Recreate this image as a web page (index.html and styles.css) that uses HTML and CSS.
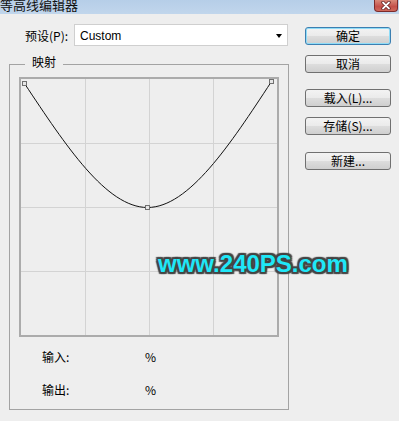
FILE: index.html
```html
<!DOCTYPE html>
<html>
<head>
<meta charset="utf-8">
<link rel="stylesheet" href="styles.css">
</head>
<body>
<div class="titlebar">
  <span class="title">等高线编辑器</span>
  <span class="close"><svg width="12" height="9" viewBox="0 0 12 9"><path d="M3 1.5L9 7.5M9 1.5L3 7.5" stroke="#5a1a1a" stroke-width="3.2" stroke-linecap="round"/><path d="M3 1.5L9 7.5M9 1.5L3 7.5" stroke="#fff" stroke-width="1.8" stroke-linecap="round"/></svg></span>
</div>
<div class="content">
  <div class="main">
    <div class="preset">
      <span class="preset-label">预设(P):</span>
      <div class="select"><span class="select-value">Custom</span><span class="arrow"></span></div>
    </div>
    <fieldset class="map">
      <legend class="map-legend">映射</legend>
      <div class="graph">
        <svg width="256" height="256" viewBox="0 0 256 256">
          <path d="M64.5 0V256M128.5 0V256M192.5 0V256M0 64.5H256M0 128.5H256M0 192.5H256" stroke="#d3d3d3" stroke-width="1" fill="none"/>
          <path d="M3.5 4.5C44.7 66.5 85.3 128.5 126.5 128.5C167.8 128.5 209.2 65.5 250.5 2.5" fill="none" stroke="#111" stroke-width="1"/>
          <rect x="1.5" y="2.5" width="4" height="4" fill="#e6e6e6" stroke="#707070"/>
          <rect x="124.5" y="126.5" width="4" height="4" fill="#e6e6e6" stroke="#707070"/>
          <rect x="248.5" y="0.5" width="4" height="4" fill="#e6e6e6" stroke="#707070"/>
        </svg>
      </div>
      <div class="readout first"><span class="readout-label">输入:</span><span>%</span></div>
      <div class="readout second"><span class="readout-label">输出:</span><span>%</span></div>
    </fieldset>
  </div>
  <div class="buttons">
    <div class="btn default">确定</div>
    <div class="btn gap-s">取消</div>
    <div class="btn gap-l">载入(L)...</div>
    <div class="btn gap-s">存储(S)...</div>
    <div class="btn gap-xl">新建...</div>
  </div>
</div>
<div class="watermark">www.240PS.com</div>
</body>
</html>
```
FILE: styles.css
```css
body {
  margin: 0;
  width: 399px;
  height: 421px;
  overflow: hidden;
  position: relative;
  background: #eeeeee;
  font-family: "Noto Sans CJK SC", "Liberation Sans", sans-serif;
  font-size: 12px;
  color: #000;
}
.titlebar {
  height: 14px;
  display: flex;
  justify-content: space-between;
  align-items: flex-start;
  background: linear-gradient(#b6cee8, #c1d6ec);
  overflow: hidden;
}
.title {
  font-size: 13px;
  line-height: 13px;
  margin-top: -2px;
  margin-left: 0;
  color: #111;
}
.close {
  width: 24px;
  height: 12px;
  margin-right: 1px;
  box-sizing: border-box;
  border: 1px solid #7b2b2b;
  border-top: none;
  border-radius: 0 0 4px 4px;
  background: linear-gradient(#d98a7a, #c4504a 60%, #d06a5c);
  display: flex;
  align-items: center;
  justify-content: center;
}
.content {
  display: flex;
}
.main {
  width: 289px;
}
.preset {
  display: flex;
  align-items: center;
  height: 22px;
  margin: 10px 0 0 25px;
}
.preset-label {
  width: 49px;
  line-height: 22px;
  padding-top: 1px;
}
.select {
  width: 214px;
  height: 22px;
  box-sizing: border-box;
  border: 1px solid #cfcfcf;
  background: #fff;
  display: flex;
  align-items: center;
  justify-content: space-between;
  padding: 1px 5px 0 5px;
  font-family: "Liberation Sans", sans-serif;
  font-size: 12px;
}
.arrow {
  width: 0;
  height: 0;
  border-left: 3px solid transparent;
  border-right: 3px solid transparent;
  border-top: 4px solid #000;
  margin-top: 1px;
}
.map {
  margin: 9px 0 0 9px;
  width: 280px;
  box-sizing: border-box;
  border: 1px solid #a3a3a3;
  padding: 4px 0 12px 9px;
}
.map-legend {
  margin-left: 6px;
  padding: 0 7px 4px;
  line-height: 14px;
  font-size: 12px;
}
.graph {
  width: 256px;
  height: 256px;
  border: 2px solid #ababab;
}
.graph svg {
  display: block;
}
.readout {
  display: flex;
  margin-left: 23px;
  line-height: 14px;
}
.readout.first {
  margin-top: 13px;
}
.readout.second {
  margin-top: 19px;
}
.readout-label {
  width: 103px;
}
.buttons {
  margin-left: 16px;
  padding-top: 13px;
  display: flex;
  flex-direction: column;
}
.btn {
  width: 86px;
  height: 18px;
  box-sizing: border-box;
  border: 1px solid #707070;
  border-radius: 3px;
  background: linear-gradient(#f3f3f3 0%, #ebebeb 48%, #dddddd 52%, #cfcfcf 100%);
  text-align: center;
  line-height: 16px;
  font-size: 12px;
}
.btn.default {
  border-color: #3c7fb1;
  box-shadow: inset 0 0 0 1px #8fdcf7;
}
.gap-s {
  margin-top: 10px;
}
.gap-l {
  margin-top: 16px;
}
.gap-xl {
  margin-top: 17px;
}
.watermark {
  position: absolute;
  left: 158px;
  top: 252px;
  font-family: "Liberation Sans", sans-serif;
  font-weight: bold;
  font-size: 24px;
  line-height: 24px;
  color: #1fe7f7;
  text-shadow:
    2px 0 1px #454545, -2px 0 1px #454545, 0 2px 1px #454545, 0 -2px 1px #454545,
    2px 2px 1px #454545, -2px -2px 1px #454545, 2px -2px 1px #454545, -2px 2px 1px #454545;
}
```
